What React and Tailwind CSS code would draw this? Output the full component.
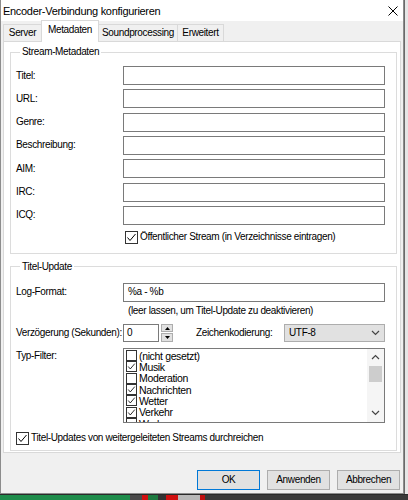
import React from 'react';

const Check = ({ size = 13, checked }) => (
  <span
    className="flex shrink-0 items-center justify-center border border-[#333] bg-white"
    style={{ width: size, height: size }}
  >
    {checked && (
      <svg width={size - 2} height={size - 2} viewBox="0 0 11 11">
        <polyline points="1.5,5.5 4,8.5 9.5,2" fill="none" stroke="#000" strokeWidth="1" />
      </svg>
    )}
  </span>
);

const Field = ({ label, value = '' }) => (
  <div className="flex h-[19px] items-center">
    <span className="w-[107px] shrink-0">{label}</span>
    <div className="flex h-[19px] flex-1 items-center border border-[#7a7a7a] bg-white pl-[4px]">
      {value}
    </div>
  </div>
);

const Chevron = ({ up }) => (
  <svg width="9" height="6" viewBox="0 0 9 6">
    <polyline
      points={up ? '1,5 4.5,1.5 8,5' : '1,1 4.5,4.5 8,1'}
      fill="none"
      stroke="#444"
      strokeWidth="1.2"
    />
  </svg>
);

const filterItems = [
  { label: '(nicht gesetzt)', checked: false },
  { label: 'Musik', checked: true },
  { label: 'Moderation', checked: false },
  { label: 'Nachrichten', checked: true },
  { label: 'Wetter', checked: true },
  { label: 'Verkehr', checked: true },
  { label: 'Werbung', checked: false },
];

const tabBase = 'flex items-center justify-center border-t border-[#d9d9d9] bg-[#f0f0f0]';

export default function App() {
  return (
    <div className="flex h-[500px] w-[408px] flex-col overflow-hidden bg-[#3a3a3a] font-['Liberation_Sans',Arial,sans-serif] text-[10px] leading-[12px] tracking-[-0.35px] text-black">
      <div className="flex h-[494px] shrink-0">
        {/* dialog window */}
        <div className="flex w-[404px] flex-col border-x border-b border-[#8c8c8c] bg-[#f0f0f0]">
          {/* title bar */}
          <div className="flex h-[21px] shrink-0 items-center bg-white pl-[2px] pr-[5px]">
            <span className="text-[11px] tracking-[-0.3px]">Encoder-Verbindung konfigurieren</span>
            <svg className="ml-auto" width="10" height="10" viewBox="0 0 10 10">
              <path d="M0.5 0.5 L9.5 9.5 M9.5 0.5 L0.5 9.5" stroke="#000" strokeWidth="1" />
            </svg>
          </div>

          <div className="flex flex-1 flex-col px-[2px]">
            {/* tabs */}
            <div className="flex h-[20px] shrink-0 items-end">
              <div className={`${tabBase} h-[17px] w-[38px] border-l`}>Server</div>
              <div className="relative z-10 -mb-[1px] flex h-[22px] w-[58px] items-start justify-center border-x border-t border-[#d9d9d9] bg-white pt-[3px]">
                Metadaten
              </div>
              <div className={`${tabBase} h-[17px] w-[79px] border-r`}>Soundprocessing</div>
              <div className={`${tabBase} h-[17px] w-[46px] border-r`}>Erweitert</div>
            </div>

            {/* tab panel */}
            <div className="flex h-[412px] shrink-0 flex-col border border-[#d9d9d9] bg-white pl-[6px] pr-[3px] pt-[4px]">
              <fieldset className="border border-[#dcdcdc] pb-[9px] pl-[5px] pr-[11px]">
                <legend className="ml-[4px] px-[2px] leading-[12px]">Stream-Metadaten</legend>
                <div className="flex flex-col gap-[4.33px] pt-[8px]">
                  <Field label="Titel:" />
                  <Field label="URL:" />
                  <Field label="Genre:" />
                  <Field label="Beschreibung:" />
                  <Field label="AIM:" />
                  <Field label="IRC:" />
                  <Field label="ICQ:" />
                </div>
                <div className="mt-[6px] flex h-[13px] items-center gap-[2px] pl-[109px]">
                  <Check checked />
                  <span>Öffentlicher Stream (in Verzeichnisse eintragen)</span>
                </div>
              </fieldset>

              <fieldset className="mt-[7px] border border-[#dcdcdc] pb-[5px] pl-[5px] pr-[11px]">
                <legend className="ml-[4px] px-[2px] leading-[12px]">Titel-Update</legend>
                <div className="pt-[10px]">
                  <Field label="Log-Format:" value="%a - %b" />
                </div>
                <div className="mt-[3px] flex h-[13px] items-center pl-[112px]">
                  (leer lassen, um Titel-Update zu deaktivieren)
                </div>

                <div className="mt-[6px] flex h-[18px] items-center">
                  <span className="w-[107px] shrink-0 whitespace-nowrap">Verzögerung (Sekunden):</span>
                  <div className="flex h-[18px] w-[36px] items-center border border-[#7a7a7a] bg-white pl-[3px]">0</div>
                  <div className="ml-[2px] flex h-[18px] w-[12px] flex-col gap-[1px]">
                    <div className="flex flex-1 items-center justify-center border border-[#adadad] bg-[#e1e1e1]">
                      <svg width="5" height="3" viewBox="0 0 5 3"><polygon points="0,3 2.5,0 5,3" fill="#000" /></svg>
                    </div>
                    <div className="flex flex-1 items-center justify-center border border-[#adadad] bg-[#e1e1e1]">
                      <svg width="5" height="3" viewBox="0 0 5 3"><polygon points="0,0 2.5,3 5,0" fill="#000" /></svg>
                    </div>
                  </div>
                  <span className="ml-[23px] w-[88px] shrink-0">Zeichenkodierung:</span>
                  <div className="flex h-[18px] flex-1 items-center border border-[#adadad] bg-[#e1e1e1] pl-[4px] pr-[4px]">
                    <span>UTF-8</span>
                    <span className="ml-auto"><Chevron /></span>
                  </div>
                </div>

                <div className="mt-[6px] flex">
                  <span className="w-[107px] shrink-0 pt-[2px]">Typ-Filter:</span>
                  <div className="flex h-[75px] flex-1 overflow-hidden border border-[#7a7a7a] bg-white">
                    <div className="flex flex-1 flex-col overflow-hidden pl-[2px] pt-[1px]">
                      {filterItems.map((item) => (
                        <div key={item.label} className="flex h-[11.33px] shrink-0 items-center gap-[2px]">
                          <Check size={11} checked={item.checked} />
                          <span className="text-[10.5px]">{item.label}</span>
                        </div>
                      ))}
                    </div>
                    <div className="flex w-[17px] shrink-0 flex-col bg-[#f5f5f5]">
                      <div className="flex h-[17px] items-center justify-center"><Chevron up /></div>
                      <div className="mx-[2px] h-[16px] bg-[#cdcdcd]" />
                      <div className="flex-1" />
                      <div className="flex h-[17px] items-center justify-center"><Chevron /></div>
                    </div>
                  </div>
                </div>

                <div className="mt-[9px] flex h-[13px] items-center gap-[2px]">
                  <Check checked />
                  <span>Titel-Updates von weitergeleiteten Streams durchreichen</span>
                </div>
              </fieldset>
            </div>

            {/* buttons */}
            <div className="mt-[17px] flex h-[20px] shrink-0 justify-end gap-[7px] pr-[1px]">
              <button className="w-[63px] border border-[#0078d7] bg-[#e1e1e1]">OK</button>
              <button className="w-[63px] border border-[#adadad] bg-[#e1e1e1]">Anwenden</button>
              <button className="w-[63px] border border-[#adadad] bg-[#e1e1e1]">Abbrechen</button>
            </div>
          </div>
        </div>
        {/* window behind, right side */}
        <div className="w-[4px] border-l border-[#6a6a6a] bg-[#e6e6e6]" />
      </div>

      {/* desktop strip at the bottom */}
      <div className="flex h-[6px] shrink-0 border-t border-[#2a2a2a]">
        <div className="w-[130px] bg-[#1e8c4b]" />
        <div className="w-[12px] bg-[#4a4a4a]" />
        <div className="w-[6px] bg-[#d01010]" />
        <div className="w-[10px] bg-[#1e7a40]" />
        <div className="w-[8px] bg-[#333]" />
        <div className="w-[12px] bg-[#d01010]" />
        <div className="w-[22px] bg-[#b8b8b8]" />
        <div className="w-[5px] bg-[#c01010]" />
        <div className="flex-1 bg-[#3a3a3a]" />
      </div>
    </div>
  );
}
